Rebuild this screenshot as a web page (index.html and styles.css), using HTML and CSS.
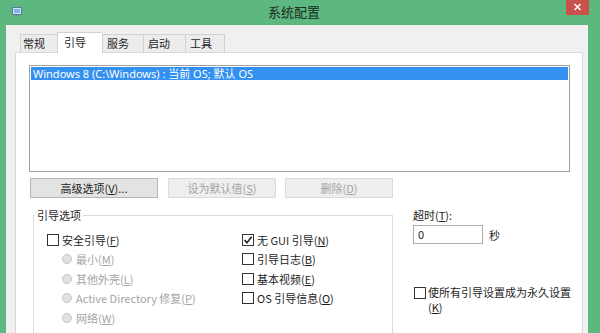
FILE: index.html
```html
<!DOCTYPE html>
<html lang="zh-CN">
<head>
	<meta charset="UTF-8">
	<title>系统配置</title>
	<link rel="stylesheet" href="styles.css">
</head>
<body>

<div class="titlebar">
	<svg class="app_icon" width="10" height="10" viewBox="0 0 10 10">
		<rect x="0.5" y="0.5" width="9" height="7" fill="#cfe6f7" stroke="#5a7a96"/>
		<rect x="2" y="2" width="6" height="4" fill="#7fb6e6"/>
		<rect x="3" y="8" width="4" height="1.5" fill="#7a8a98"/>
	</svg>
	<div class="title">系统配置</div>
	<div class="x_btn">
		<svg width="23" height="15" viewBox="0 0 23 15">
			<path d="M8.5 4L14.5 10M14.5 4L8.5 10" stroke="#fff" stroke-width="1.5"/>
		</svg>
	</div>
</div>

<div class="client">
	<ul class="tabs">
		<li class="t1">常规</li>
		<li class="t2 active">引导</li>
		<li class="t3">服务</li>
		<li class="t4">启动</li>
		<li class="t5">工具</li>
	</ul>

	<div class="panel">
		<div class="listbox">
			<div class="item selected">Windows 8 (C:\Windows) : 当前 OS; 默认 OS</div>
		</div>

		<div class="btn_row">
			<div class="btn b1">高级选项(<u>V</u>)...</div>
			<div class="btn b2 disabled">设为默认值(<u>S</u>)</div>
			<div class="btn b3 disabled">删除(<u>D</u>)</div>
		</div>

		<div class="lower">
			<fieldset class="group">
				<legend>引导选项</legend>
				<div class="cols">
					<div class="col left">
						<div class="row"><span class="box"></span>安全引导(<u>F</u>)</div>
						<div class="row sub disabled"><span class="radio"></span>最小(<u>M</u>)</div>
						<div class="row sub disabled"><span class="radio"></span>其他外壳(<u>L</u>)</div>
						<div class="row sub disabled"><span class="radio"></span>Active Directory 修复(<u>P</u>)</div>
						<div class="row sub disabled"><span class="radio"></span>网络(<u>W</u>)</div>
					</div>
					<div class="col right">
						<div class="row"><span class="box checked">
							<svg width="10" height="10" viewBox="0 0 10 10"><path d="M1.5 5L4 7.8L8.6 1.8" fill="none" stroke="#222" stroke-width="1.6"/></svg>
						</span>无 GUI 引导(<u>N</u>)</div>
						<div class="row"><span class="box"></span>引导日志(<u>B</u>)</div>
						<div class="row"><span class="box"></span>基本视频(<u>E</u>)</div>
						<div class="row"><span class="box"></span>OS 引导信息(<u>O</u>)</div>
					</div>
				</div>
			</fieldset>

			<div class="side">
				<div class="lbl">超时(<u>T</u>):</div>
				<div class="timeout">
					<div class="input">0</div>
					<span>秒</span>
				</div>
				<div class="perm">
					<span class="box"></span>
					<div class="perm_text">
						<div>使所有引导设置成为永久设置</div>
						<div>(<u>K</u>)</div>
					</div>
				</div>
			</div>
		</div>
	</div>
</div>

</body>
</html>
```

FILE: styles.css
```css
*{
	margin: 0;
	padding: 0;
	box-sizing: border-box;
}
li{
	list-style: none;
}
body{
	width: 600px;
	height: 333px;
	overflow: hidden;
	background: #5cb87f;
	font-family: "Noto Sans", "Noto Sans CJK SC", sans-serif;
	font-size: 11px;
	color: #1e1e1e;
}

/* 标题栏 */
.titlebar{
	height: 25px;
	display: flex;
	align-items: flex-start;
}
.app_icon{
	margin: 7px 0 0 12px;
	flex: none;
}
.title{
	flex: 1;
	text-align: center;
	font-family: "Noto Sans CJK SC", sans-serif;
	font-size: 13px;
	line-height: 24px;
	color: #1d2a22;
}
/* 关闭按钮 */
.x_btn{
	flex: none;
	width: 23px;
	height: 15px;
	margin-right: 11px;
	background: #c9504b;
}
.x_btn svg{
	display: block;
}

/* 窗口内容 */
.client{
	margin-left: 6px;
	width: 582px;
	height: 308px;
	background: #f0f0f0;
	padding-top: 7px;
}
.tabs{
	display: flex;
	align-items: flex-end;
	padding-left: 14px;
	height: 20px;
	font-family: "Noto Sans CJK SC", sans-serif;
}
.tabs li{
	height: 18px;
	border: 1px solid #d2d2d2;
	border-bottom: none;
	border-right: none;
	background: #ececec;
	line-height: 17px;
	padding-left: 2px;
}
.tabs .t1{ width: 37px; }
.tabs .t2{ width: 45px; }
.tabs .t3{ width: 41px; padding-left: 4px; }
.tabs .t4{ width: 42px; padding-left: 4px; }
.tabs .t5{ width: 40px; padding-left: 4px; border-right: 1px solid #d2d2d2; }
.tabs .active{
	height: 21px;
	background: #fff;
	padding-left: 6px;
	line-height: 19px;
	margin-bottom: -1px;
	position: relative;
}

.panel{
	margin-left: 9px;
	width: 568px;
	height: 290px;
	background: #fff;
	border: 1px solid #d9d9d9;
	border-bottom: none;
	padding-top: 12px;
}
.listbox{
	margin-left: 13px;
	width: 541px;
	height: 107px;
	border: 1px solid #a0a0a0;
	padding: 1px;
}
.item{
	height: 13px;
	line-height: 13px;
	padding-left: 2px;
}
.item.selected{
	background: #3390ef;
	color: #fff;
}

.btn_row{
	display: flex;
	margin: 6px 0 0 14px;
	gap: 10px;
	font-family: "Noto Sans CJK SC", sans-serif;
}
.btn{
	height: 20px;
	border: 1px solid #b4b4b4;
	background: #e3e3e3;
	text-align: center;
	line-height: 18px;
}
.b1{ width: 128px; }
.b2{ width: 108px; }
.b3{ width: 108px; margin-left: -1px; }
.btn.disabled{
	background: #eeeeee;
	border-color: #dadada;
}
.disabled{
	color: #a4a4a4;
}

/* 下半部分 */
.lower{
	display: flex;
	margin-top: 10px;
	font-family: "Noto Sans CJK SC", sans-serif;
}
.group{
	margin-left: 17px;
	width: 360px;
	height: 140px;
	border: 1px solid #dcdcdc;
	padding: 0 0 0 13px;
}
.group legend{
	margin-left: -12px;
	padding: 0 2px;
	line-height: 14px;
}
.cols{
	display: flex;
	padding-top: 8px;
}
.col.left{
	width: 195px;
}
.row{
	height: 19.5px;
	display: flex;
	align-items: center;
}
.row.sub{
	padding-left: 15px;
}
.box{
	width: 12px;
	height: 12px;
	border: 1px solid #333;
	background: #fff;
	margin-right: 3px;
	display: flex;
	align-items: center;
	justify-content: center;
	flex-shrink: 0;
}
.radio{
	width: 10px;
	height: 10px;
	border-radius: 50%;
	border: 1px solid #c4c4c4;
	background: #e2e2e2;
	margin-right: 4px;
}

.side{
	margin-left: 20px;
}
.lbl{
	line-height: 14px;
}
.timeout{
	display: flex;
	align-items: center;
	margin-top: 3px;
}
.input{
	width: 70px;
	height: 19px;
	border: 1px solid #adadad;
	padding-left: 4px;
	line-height: 17px;
	margin-right: 6px;
}
.perm{
	display: flex;
	align-items: flex-start;
	margin-top: 41px;
	margin-left: 1px;
}
.perm .box{
	margin-top: 2px;
	margin-right: 2px;
}
.perm_text{
	line-height: 15px;
	white-space: nowrap;
}
```
